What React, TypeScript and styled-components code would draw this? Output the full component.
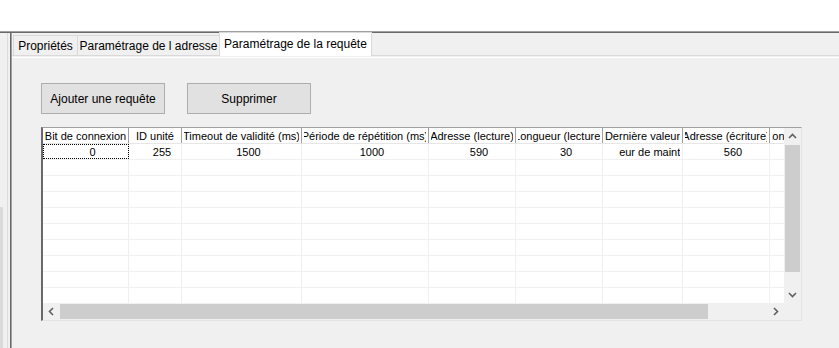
import React from "react";
import styled, { createGlobalStyle } from "styled-components";

const GlobalStyle = createGlobalStyle`
  html, body {
    margin: 0;
    padding: 0;
    background: #fff;
  }
  body {
    font-family: "Liberation Sans", Arial, sans-serif;
    color: #000;
  }
`;

type Column = { title: string; width: number };

const columns: Column[] = [
  { title: "Bit de connexion", width: 86 },
  { title: "ID unité", width: 53 },
  { title: "Timeout de validité (ms)", width: 120 },
  { title: "Période de répétition (ms)", width: 127 },
  { title: "Adresse (lecture)", width: 87 },
  { title: "Longueur (lecture)", width: 87 },
  { title: "Dernière valeur", width: 80 },
  { title: "Adresse (écriture)", width: 87 },
  { title: "Longueur (écriture)", width: 87 },
];

const rows: string[][] = [
  ["0", "255", "1500", "1000", "590", "30", "Valeur de maintien", "560", ""],
  ...Array.from({ length: 9 }, () => columns.map(() => "")),
];

const tabs = [
  { label: "Propriétés", width: 65 },
  { label: "Paramétrage de l adresse", width: 143 },
  { label: "Paramétrage de la requête", width: 153, active: true },
];

const Chevron = ({ dir }: { dir: "up" | "down" | "left" | "right" }) => {
  const rot = { up: 0, right: 90, down: 180, left: 270 }[dir];
  return (
    <svg width="9" height="9" viewBox="0 0 9 9" style={{ transform: `rotate(${rot}deg)` }}>
      <polyline points="1,6 4.5,2.5 8,6" fill="none" stroke="#606060" strokeWidth="1.6" />
    </svg>
  );
};

const App = () => {
  return (
    <>
      <GlobalStyle />
      <Page>
        <TopBar />
        <Body>
          <SideStrip />
          <Main>
            <TabStrip>
              {tabs.map((t) => (
                <Tab key={t.label} $active={!!t.active} $w={t.width}>
                  {t.label}
                </Tab>
              ))}
            </TabStrip>
            <Panel>
              <ButtonRow>
                <Button>Ajouter une requête</Button>
                <Button>Supprimer</Button>
              </ButtonRow>
              <Grid>
                <Viewport>
                  <HeaderRow>
                    {columns.map((c) => (
                      <HeaderCell key={c.title} $w={c.width}>
                        <Clip>
                          <span>{c.title}</span>
                        </Clip>
                      </HeaderCell>
                    ))}
                  </HeaderRow>
                  {rows.map((r, i) => (
                    <Row key={i}>
                      {r.map((v, j) => (
                        <Cell key={j} $w={columns[j].width} $focused={i === 0 && j === 0}>
                          <Clip>
                            <span>{v}</span>
                          </Clip>
                        </Cell>
                      ))}
                    </Row>
                  ))}
                </Viewport>
                <VScroll>
                  <ArrowBtn>
                    <Chevron dir="up" />
                  </ArrowBtn>
                  <VThumb />
                  <Track />
                  <ArrowBtn>
                    <Chevron dir="down" />
                  </ArrowBtn>
                </VScroll>
                <HScroll>
                  <ArrowBtn>
                    <Chevron dir="left" />
                  </ArrowBtn>
                  <HThumb />
                  <Track />
                  <ArrowBtn>
                    <Chevron dir="right" />
                  </ArrowBtn>
                </HScroll>
                <Corner />
              </Grid>
            </Panel>
          </Main>
        </Body>
      </Page>
    </>
  );
};

export default App;

const Page = styled.div`
  width: 839px;
  height: 348px;
  display: flex;
  flex-direction: column;
  overflow: hidden;
`;

const TopBar = styled.div`
  height: 31px;
  flex: none;
  background: #fff;
  border-bottom: 1px solid #a0a0a0;
`;

const Body = styled.div`
  flex: 1;
  display: flex;
  background: #f0f0f0;
  border-top: 1px solid #696969;
  min-height: 0;
`;

const SideStrip = styled.div`
  width: 10px;
  flex: none;
  border-right: 1px solid #696969;
  background:
    linear-gradient(#dadada, #dadada) 0 174px / 3px 100% no-repeat,
    linear-gradient(to right, #f0f0f0 0 7px, #dcdcdc 7px 8px, #f0f0f0 8px);
`;

const Main = styled.div`
  flex: 1;
  display: flex;
  flex-direction: column;
  border-left: 1px solid #a0a0a0;
  min-width: 0;
`;

const TabStrip = styled.div`
  height: 22px;
  flex: none;
  display: flex;
  align-items: flex-end;
  padding-left: 1px;
  border-bottom: 1px solid #d9d9d9;
`;

const Tab = styled.div<{ $active: boolean; $w: number }>`
  box-sizing: border-box;
  width: ${(p) => p.$w}px;
  height: ${(p) => (p.$active ? 24 : 20)}px;
  margin-bottom: ${(p) => (p.$active ? -1 : 0)}px;
  margin-right: -1px;
  display: flex;
  align-items: center;
  justify-content: center;
  padding-bottom: ${(p) => (p.$active ? 2 : 0)}px;
  border: 1px solid #d9d9d9;
  border-bottom: none;
  background: ${(p) => (p.$active ? "#fff" : "#f0f0f0")};
  position: relative;
  z-index: ${(p) => (p.$active ? 1 : 0)};
  font-size: 12px;
  white-space: nowrap;
`;

const Panel = styled.div`
  flex: 1;
  margin-top: 1px;
  border-top: 1px solid #fff;
  padding: 25px 0 0 29px;
  display: flex;
  flex-direction: column;
  gap: 13px;
`;

const ButtonRow = styled.div`
  display: flex;
  gap: 22px;
`;

const Button = styled.button`
  box-sizing: border-box;
  width: 124px;
  height: 31px;
  margin: 0;
  padding: 0;
  background: #e1e1e1;
  border: 1px solid #adadad;
  font-family: "Liberation Sans", Arial, sans-serif;
  font-size: 12px;
  color: #000;
`;

const Grid = styled.div`
  box-sizing: border-box;
  width: 761px;
  height: 194px;
  display: grid;
  grid-template-columns: 1fr 17px;
  grid-template-rows: 1fr 17px;
  border-left: 2px solid #696969;
  border-top: 1px solid #a0a0a0;
  border-right: 1px solid #e3e3e3;
  border-bottom: 1px solid #e3e3e3;
  background: #fff;
  font-size: 11px;
`;

const Viewport = styled.div`
  overflow: hidden;
  background: #fff;
`;

const HeaderRow = styled.div`
  display: flex;
  height: 16px;
  box-sizing: border-box;
  border-bottom: 1px solid #e6e6e6;
`;

const Clip = styled.div`
  flex: 1;
  min-width: 0;
  height: 100%;
  display: flex;
  align-items: center;
  justify-content: center;
  overflow: hidden;
  white-space: nowrap;
  span {
    flex: none;
  }
`;

const HeaderCell = styled.div<{ $w: number }>`
  box-sizing: border-box;
  flex: none;
  width: ${(p) => p.$w}px;
  display: flex;
  padding: 0 2px;
  border-right: 1px solid #a0a0a0;
`;

const Row = styled.div`
  display: flex;
  height: 16px;
  box-sizing: border-box;
  border-bottom: 1px solid #f0f0f0;
`;

const Cell = styled.div<{ $w: number; $focused: boolean }>`
  box-sizing: border-box;
  flex: none;
  width: ${(p) => p.$w}px;
  display: flex;
  padding: 0 2px 0 16px;
  border-right: 1px solid #f0f0f0;
  outline: ${(p) => (p.$focused ? "1px dotted #000" : "none")};
  outline-offset: -1px;
`;

const VScroll = styled.div`
  display: flex;
  flex-direction: column;
  background: #f0f0f0;
`;

const HScroll = styled.div`
  display: flex;
  background: #f0f0f0;
`;

const ArrowBtn = styled.div`
  flex: none;
  width: 17px;
  height: 17px;
  display: flex;
  align-items: center;
  justify-content: center;
`;

const VThumb = styled.div`
  flex: none;
  height: 127px;
  margin: 0 1px;
  background: #cdcdcd;
`;

const HThumb = styled.div`
  flex: none;
  width: 648px;
  margin: 1px 0;
  background: #cdcdcd;
`;

const Track = styled.div`
  flex: 1;
`;

const Corner = styled.div`
  background: #f0f0f0;
`;
